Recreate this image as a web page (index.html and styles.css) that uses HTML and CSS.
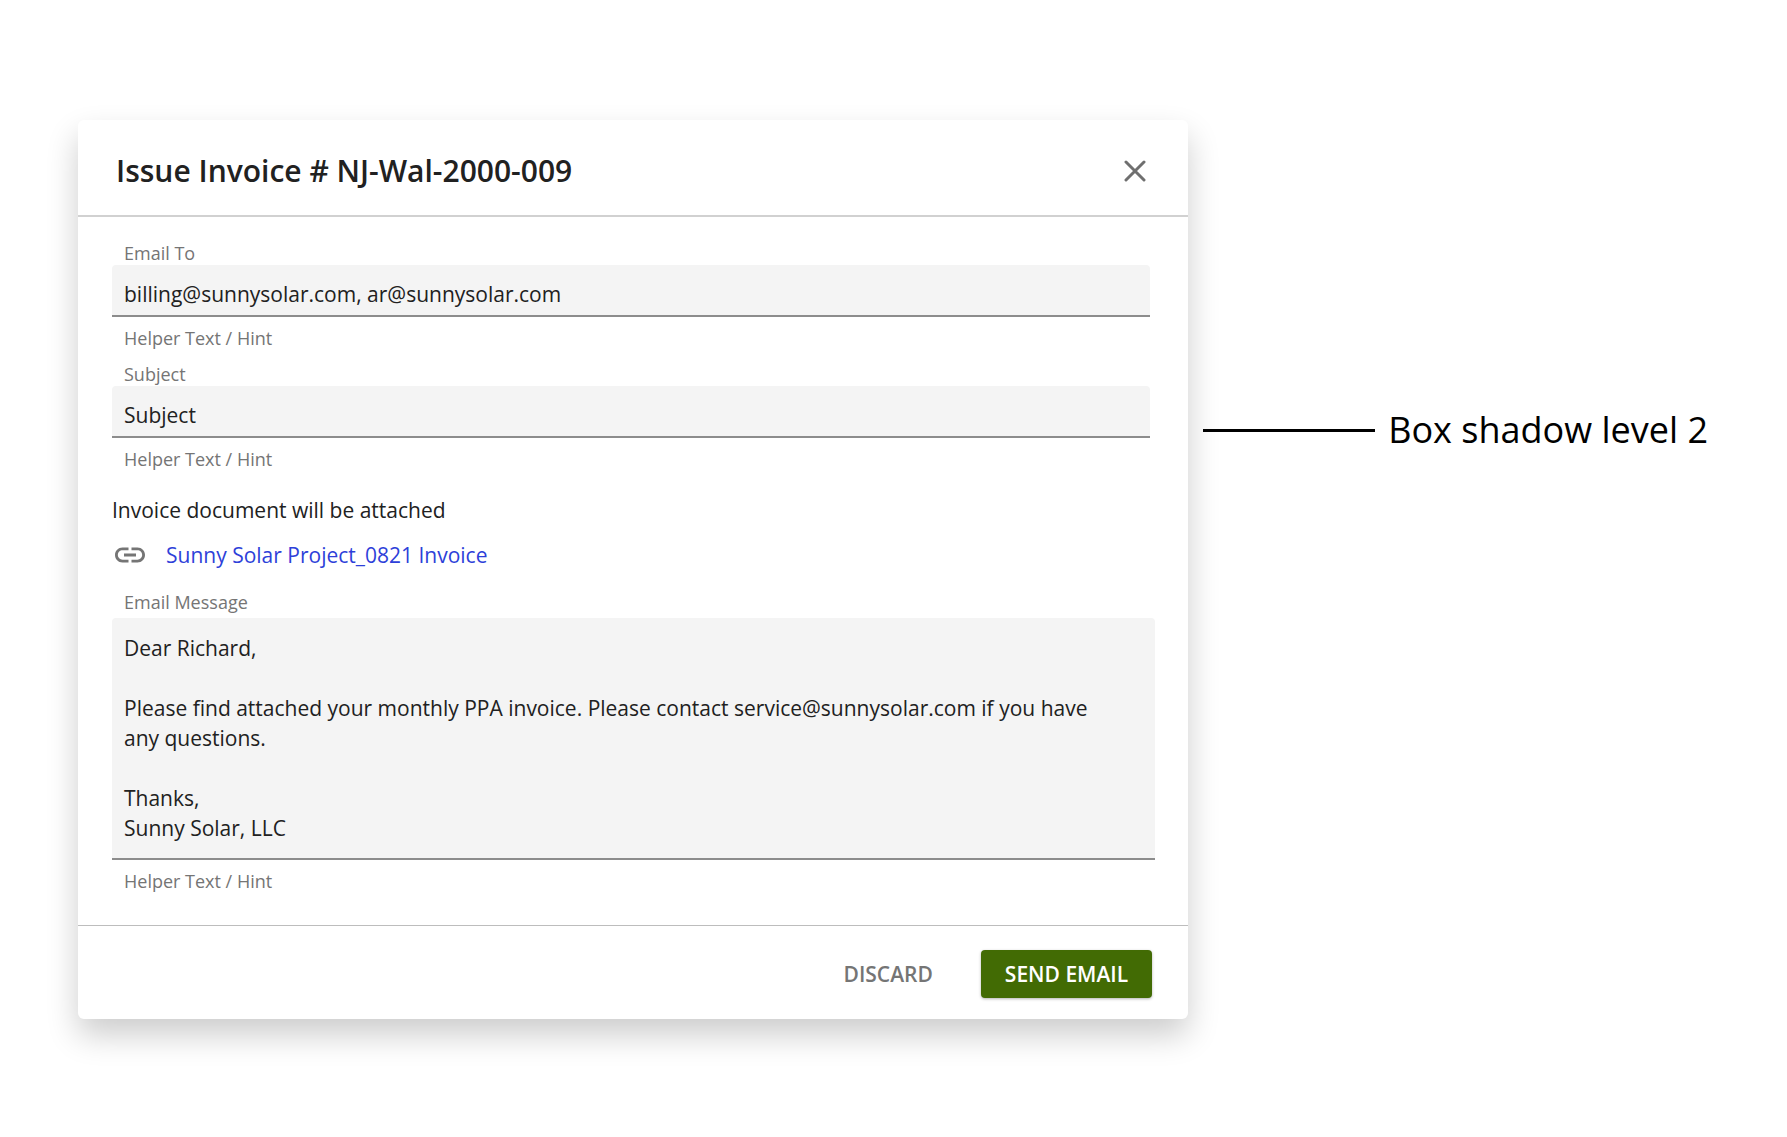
FILE: index.html
```html
<!DOCTYPE html>
<html lang="en">
<head>
  <meta charset="UTF-8" />
  <title>Issue Invoice</title>
  <link rel="stylesheet" href="styles.css">
</head>
<body>
  <main class="page">
    <form class="dialog" role="dialog" aria-labelledby="dialogTitle">
      <header class="dialog-header">
        <h1 id="dialogTitle">Issue Invoice # NJ-Wal-2000-009</h1>
        <button type="button" class="close" aria-label="Close">
          <svg width="22" height="22" viewBox="0 0 22 22">
            <path d="M2 2L20 20M20 2L2 20" fill="none" stroke="#6f6f6f" stroke-width="3" stroke-linecap="round" />
          </svg>
        </button>
      </header>

      <div class="dialog-body">
        <div class="field short">
          <label for="emailTo">Email To</label>
          <input type="text" id="emailTo" value="billing@sunnysolar.com, ar@sunnysolar.com" />
          <p class="hint">Helper Text / Hint</p>
        </div>

        <div class="field short">
          <label for="subject">Subject</label>
          <input type="text" id="subject" value="Subject" />
          <p class="hint">Helper Text / Hint</p>
        </div>

        <p class="attach-title">Invoice document will be attached</p>
        <div class="attachment">
          <svg width="36" height="36" viewBox="0 0 24 24">
            <path fill="#757575" d="M3.9 12c0-1.71 1.39-3.1 3.1-3.1h4V7H7c-2.76 0-5 2.24-5 5s2.24 5 5 5h4v-1.9H7c-1.71 0-3.1-1.39-3.1-3.1zM8 13h8v-2H8v2zm9-6h-4v1.9h4c1.71 0 3.1 1.39 3.1 3.1s-1.39 3.1-3.1 3.1h-4V17h4c2.76 0 5-2.24 5-5s-2.24-5-5-5z" />
          </svg>
          <a href="#">Sunny Solar Project_0821 Invoice</a>
        </div>

        <div class="field message">
          <label for="message">Email Message</label>
          <textarea id="message" rows="7">Dear Richard,

Please find attached your monthly PPA invoice. Please contact service@sunnysolar.com if you have any questions.

Thanks,
Sunny Solar, LLC</textarea>
          <p class="hint">Helper Text / Hint</p>
        </div>
      </div>

      <footer class="dialog-footer">
        <button type="button" class="btn">DISCARD</button>
        <button type="submit" class="btn primary">SEND EMAIL</button>
      </footer>
    </form>

    <aside class="note">
      <span class="note-line"></span>
      <span>Box shadow level 2</span>
    </aside>
  </main>
</body>
</html>
```

FILE: styles.css
```css
* {
  box-sizing: border-box;
}

body {
  margin: 0;
  background: #fff;
  color: #212121;
  font-family: "Open Sans", sans-serif;
  font-size: 21px;
  line-height: 30px;
}

p, h1 {
  margin: 0;
}

.page {
  display: flex;
  align-items: flex-start;
  gap: 15px;
  padding: 120px 79px 118px 78px;
}

.dialog {
  flex: 1;
  background: #fff;
  border-radius: 6px;
  box-shadow: 0 16px 32px rgba(0, 0, 0, 0.2);
}

.dialog-header {
  display: flex;
  align-items: center;
  justify-content: space-between;
  padding: 31px 36px 24px 38px;
  border-bottom: 2px solid #d1d1d1;
}

h1 {
  font-size: 30px;
  font-weight: 600;
  line-height: 40px;
}

button {
  font-family: inherit;
  border: none;
  background: none;
  cursor: pointer;
}

.close {
  display: flex;
  padding: 6px;
}

.dialog-body {
  padding: 24px 33px 32px 34px;
}

.field {
  display: flex;
  flex-direction: column;
}

.short {
  margin-right: 5px;
  margin-bottom: 12px;
}

label, .hint {
  padding: 0 12px;
  color: #757575;
  font-size: 18px;
  line-height: 24px;
}

.hint {
  margin-top: 9px;
}

input, textarea {
  width: 100%;
  border: none;
  border-bottom: 2px solid #8c8c8c;
  border-radius: 4px 4px 0 0;
  background: #f4f4f4;
  color: inherit;
  font: inherit;
  outline: none;
}

input {
  height: 52px;
  padding: 7px 12px 0;
}

textarea {
  margin-top: 4px;
  padding: 15px 40px 15px 12px;
  resize: none;
  overflow: hidden;
}

.attach-title {
  margin-top: 24px;
}

.attachment {
  display: flex;
  align-items: center;
  gap: 18px;
  margin-top: 12px;
}

.attachment a {
  color: #2e3fd9;
  text-decoration: none;
}

.message {
  margin-top: 17px;
}

.dialog-footer {
  display: flex;
  justify-content: flex-end;
  gap: 24px;
  padding: 24px 36px 21px;
  border-top: 1px solid #bdbdbd;
}

.btn {
  height: 48px;
  padding: 0 24px;
  border-radius: 4px;
  color: #757575;
  font-size: 21px;
  font-weight: 600;
}

.primary {
  background: #426b04;
  color: #fff;
  box-shadow: 0 1px 3px rgba(0, 0, 0, 0.3);
}

.note {
  display: flex;
  align-items: center;
  gap: 13px;
  margin-top: 286px;
  color: #000;
  font-size: 36px;
  line-height: 48px;
  white-space: nowrap;
}

.note-line {
  width: 172px;
  height: 3px;
  background: #000;
}
```
